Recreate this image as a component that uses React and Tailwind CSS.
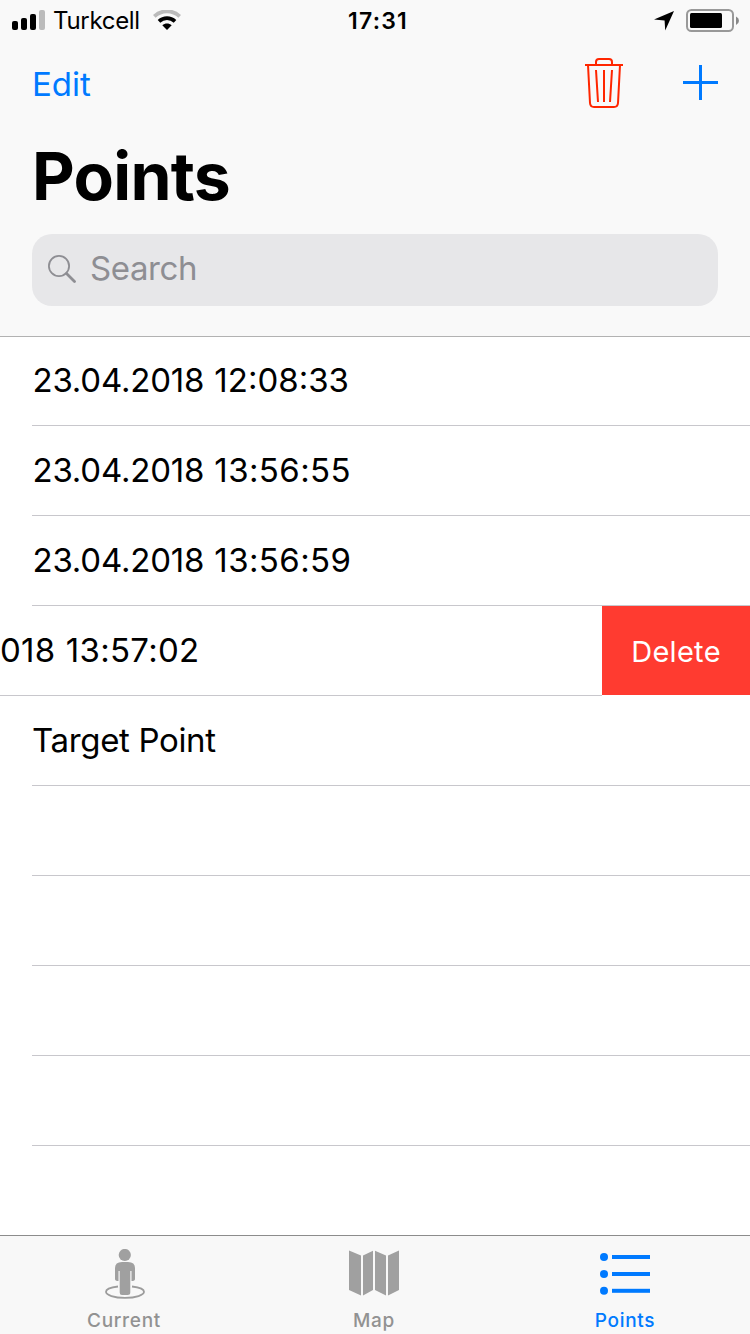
import React from "react";

function Signal() {
  return (
    <svg width="34" height="20" viewBox="0 0 34 20" className="shrink-0">
      <rect x="0" y="11" width="6" height="9" rx="2" fill="#000" />
      <rect x="9" y="8" width="6" height="12" rx="2" fill="#000" />
      <rect x="18" y="4" width="6" height="16" rx="2" fill="#000" />
      <rect x="27" y="0" width="6" height="20" rx="2" fill="#bbb" />
    </svg>
  );
}

function Wifi() {
  return (
    <svg width="28" height="20" viewBox="0 0 28 20" className="shrink-0">
      <path d="M1.3 6.3C8.6 -.4 19.4 -.4 26.7 6.3" fill="none" stroke="#bbb" strokeWidth="3.8" />
      <path d="M6 11.3C10.6 7.1 17.4 7.1 22 11.3" fill="none" stroke="#000" strokeWidth="3.8" />
      <path d="M9.3 15.3C12 13 16 13 18.7 15.3L14 20Z" fill="#000" />
    </svg>
  );
}

function LocationArrow() {
  return (
    <svg width="20" height="20" viewBox="0 0 20 20" className="mt-[2px] shrink-0">
      <path d="M20 0L11.2 19.6L10.6 9.4L0 8.6Z" fill="#000" />
    </svg>
  );
}

function Battery() {
  return (
    <svg width="54" height="24" viewBox="0 0 54 24" className="mt-[2px] shrink-0">
      <rect x="1" y="1" width="46" height="21" rx="4.5" fill="none" stroke="#999" strokeWidth="2" />
      <rect x="4" y="4" width="32" height="15" rx="1.5" fill="#000" />
      <path d="M50 7.5Q53 9 53 11.7Q53 14.5 50 16Z" fill="#888" />
    </svg>
  );
}

function Trash() {
  return (
    <svg width="38" height="50" viewBox="0 0 38 50" fill="none" stroke="#ff2600" strokeWidth="2">
      <path d="M0 7H38M11 7V4Q11 1 14 1H24Q27 1 27 4V7" />
      <path d="M3 7L5 45Q5.3 49 9 49H29Q32.7 49 33 45L35 7" />
      <path d="M11 12L13 44M19 12V44M27 12L25 44" />
    </svg>
  );
}

function Plus() {
  return (
    <svg width="35" height="35" viewBox="0 0 35 35" fill="none" stroke="#007aff" strokeWidth="3">
      <path d="M0 17.5H35M17.5 0V35" />
    </svg>
  );
}

function Magnifier() {
  return (
    <svg width="28" height="28" viewBox="0 0 28 28" fill="none" stroke="#8e8e93">
      <circle cx="11" cy="11" r="10.1" strokeWidth="1.8" />
      <path d="M18.5 18.5L26.5 26.5" strokeWidth="2.8" strokeLinecap="round" />
    </svg>
  );
}

function PersonIcon() {
  return (
    <svg width="40" height="50" viewBox="0 0 40 50">
      <path d="M13 37.5C5 38.4 1 40.4 1 42.8C1 46 9 48.9 20 48.9S39 46 39 42.8C39 40.4 35 38.4 27 37.5" fill="none" stroke="#9c9c9c" strokeWidth="1.8" />
      <circle cx="19.8" cy="6" r="6.1" fill="#a0a0a0" />
      <path d="M10 30V19Q10 13 17 13H23Q30 13 30 19V30Q30 32 26.5 32V22H25.3V43.5Q25.3 46 22.5 46H17Q14.7 46 14.7 43.5V22H13.5V32Q10 32 10 30Z" fill="#a0a0a0" />
    </svg>
  );
}

function MapIcon() {
  return (
    <svg width="50" height="46" viewBox="0 0 50 46" fill="#a0a0a0">
      <path d="M0 .5L12 5.5V45.5L0 40Z" />
      <path d="M14 5.5L24 .7V40L14 45.5Z" />
      <path d="M26 .7L37 5.5V45.5L26 40Z" />
      <path d="M39 5.5L50 .5V40L39 45.5Z" />
    </svg>
  );
}

function ListIcon() {
  return (
    <svg width="50" height="42" viewBox="0 0 50 42" fill="#007aff">
      <circle cx="4" cy="4" r="4" />
      <circle cx="4" cy="21" r="4" />
      <circle cx="4" cy="37.8" r="4" />
      <rect x="12" y="2" width="38" height="4" />
      <rect x="12" y="19" width="38" height="4" />
      <rect x="12" y="35.8" width="38" height="4" />
    </svg>
  );
}

function Row({ children }) {
  return (
    <li className="flex h-[90px] shrink-0 pl-8">
      <div className="flex flex-1 items-center border-b border-[#c8c7cc] pb-px">{children}</div>
    </li>
  );
}

export default function App() {
  return (
    <div className="flex h-[1334px] w-[750px] flex-col overflow-hidden bg-white font-['Inter',sans-serif] text-black">
      <header className="flex h-[337px] shrink-0 flex-col border-b border-[#b2b2b2] bg-[#f9f9f9]">
        <div className="grid h-10 grid-cols-3 items-center pr-[10px] pl-3">
          <div className="flex h-10 items-center">
            <Signal />
            <span className="ml-[7px] w-[100px] pt-px text-[24px] leading-[39px] tracking-[-0.3px]">Turkcell</span>
            <Wifi />
          </div>
          <span className="h-10 pt-[2px] pl-1 text-center text-[23px] leading-[39px] font-semibold tracking-[1.2px]">17:31</span>
          <div className="flex h-10 items-center justify-end gap-3">
            <LocationArrow />
            <Battery />
          </div>
        </div>
        <div className="flex h-[88px] items-center pr-8 pl-[32px]">
          <button className="text-[33px] leading-[88px] text-[#007aff]">Edit</button>
          <div className="ml-auto flex items-center gap-[60px] pb-[3px]">
            <Trash />
            <Plus />
          </div>
        </div>
        <h1 className="mt-[6px] ml-8 h-[84px] text-[66px] leading-[84px] font-bold tracking-[-0.7px]">Points</h1>
        <div className="mx-8 mt-[16px] flex h-[72px] items-center rounded-[20px] bg-[#e7e7e9] pb-[2px] pl-4 text-[#8e8e93]">
          <Magnifier />
          <span className="ml-[14px] pb-[2px] text-[33px] leading-[68px] tracking-[-0.4px]">Search</span>
        </div>
      </header>

      <ul className="-mt-px flex min-h-0 flex-1 flex-col overflow-hidden text-[33px] leading-[88px] tracking-[-0.2px] whitespace-nowrap">
        <Row><span className="pl-[0.5px]">23.04.2018 <span className="ml-px tracking-[0px]">12:08:33</span></span></Row>
        <Row><span className="pl-[0.5px]">23.04.2018 <span className="ml-px tracking-[0.4px]">13:56:55</span></span></Row>
        <Row><span className="pl-[0.5px]">23.04.2018 <span className="ml-px tracking-[0.4px]">13:56:59</span></span></Row>
        <li className="flex h-[90px] shrink-0">
          <div className="flex w-[602px] items-center border-b border-[#c8c7cc] pb-px">
            <span className="tracking-[0.2px]">018 <span className="ml-px tracking-[0.3px]">13:57:02</span></span>
          </div>
          <button className="h-[89px] flex-1 bg-[#ff3b30] pt-[2px] text-[29px] leading-[87px] tracking-[0.3px] text-white">Delete</button>
        </li>
        <Row><span className="tracking-[-0.35px]">Target Point</span></Row>
        <Row />
        <Row />
        <Row />
        <Row />
        <Row />
      </ul>

      <nav className="grid h-[99px] shrink-0 grid-cols-[248px_252px_250px] border-t border-[#8c8c8c] bg-[#f8f8f8] pt-px text-[19px] leading-6 font-medium tracking-[0.7px] text-[#929292]">
        <div className="flex flex-col items-center">
          <div className="flex h-[72px] items-center pt-[2px] pl-[2px]"><PersonIcon /></div>
          <span>Current</span>
        </div>
        <div className="flex flex-col items-center">
          <div className="flex h-[72px] items-center pb-px"><MapIcon /></div>
          <span>Map</span>
        </div>
        <div className="flex flex-col items-center text-[#007aff]">
          <div className="flex h-[72px] items-center pt-[2px]"><ListIcon /></div>
          <span>Points</span>
        </div>
      </nav>
    </div>
  );
}
